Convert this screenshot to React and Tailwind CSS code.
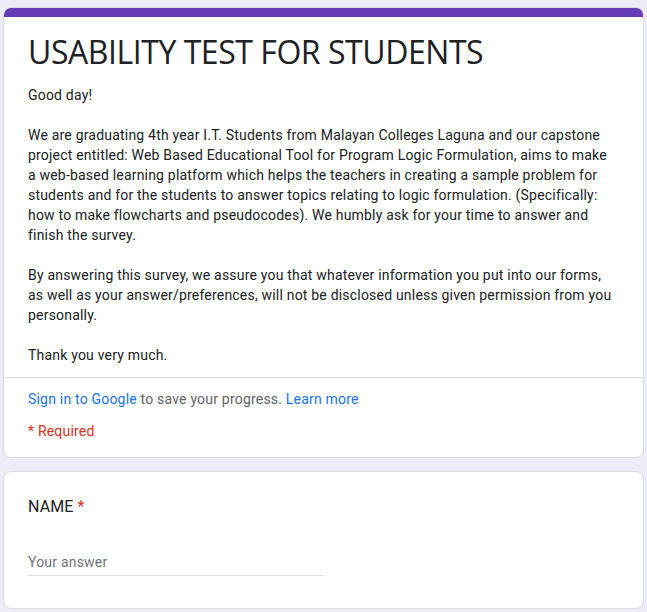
export default function App() {
  return (
    <div className="min-h-[612px] bg-[#f0ebf8] px-[3px] pt-[7px] pb-[5px]" style={{ fontFamily: "Roboto, 'Liberation Sans', sans-serif" }}>
      <div className="w-[641px] flex flex-col gap-[13px]">
        <div className="rounded-lg bg-white border border-[#dadce0] overflow-hidden">
          <div className="h-[10px] bg-[#673ab7] -mx-px -mt-px"></div>
          <div className="px-6 pt-[15px]">
            <h1 className="text-[32px] leading-[40px] text-[#202124] tracking-[-0.45px]" style={{ fontFamily: "'Open Sans', sans-serif" }}>
              USABILITY TEST FOR STUDENTS
            </h1>
            <div className="mt-[13px] text-[14px] leading-[20px] text-[#202124] tracking-[0.2px] pb-[12px]">
              <p>Good day!</p>
              <p className="mt-5">
                We are graduating 4th year I.T. Students from Malayan Colleges Laguna and our capstone<br />
                project entitled: Web Based Educational Tool for Program Logic Formulation, aims to make<br />
                a web-based learning platform which helps the teachers in creating a sample problem for<br />
                students and for the students to answer topics relating to logic formulation. (Specifically:<br />
                how to make flowcharts and pseudocodes). We humbly ask for your time to answer and<br />
                finish the survey.
              </p>
              <p className="mt-5">
                By answering this survey, we assure you that whatever information you put into our forms,<br />
                as well as your answer/preferences, will not be disclosed unless given permission from you<br />
                personally.
              </p>
              <p className="mt-5">Thank you very much.</p>
            </div>
          </div>
          <div className="border-t border-[#dadce0] px-6 pt-[11px] pb-[16px] text-[14px] leading-[20px] tracking-[0.2px]">
            <p className="text-[#5f6368]">
              <span className="text-[#1a73e8]">Sign in to Google</span> to save your progress.{" "}
              <span className="text-[#1a73e8]">Learn more</span>
            </p>
            <p className="mt-[12px] text-[#d93025]">* Required</p>
          </div>
        </div>
        <div className="rounded-lg bg-white border border-[#dadce0] px-6 pt-[23px] pb-[32px]">
          <div className="text-[16px] leading-[24px] text-[#202124] tracking-[0.1px]">
            NAME <span className="text-[#d93025]">*</span>
          </div>
          <div className="mt-[33px] w-[295px] border-b border-[#dadce0] pb-[3px] text-[14px] leading-[20px] text-[#70757a] tracking-[0.2px]">
            Your answer
          </div>
        </div>
      </div>
    </div>
  );
}
